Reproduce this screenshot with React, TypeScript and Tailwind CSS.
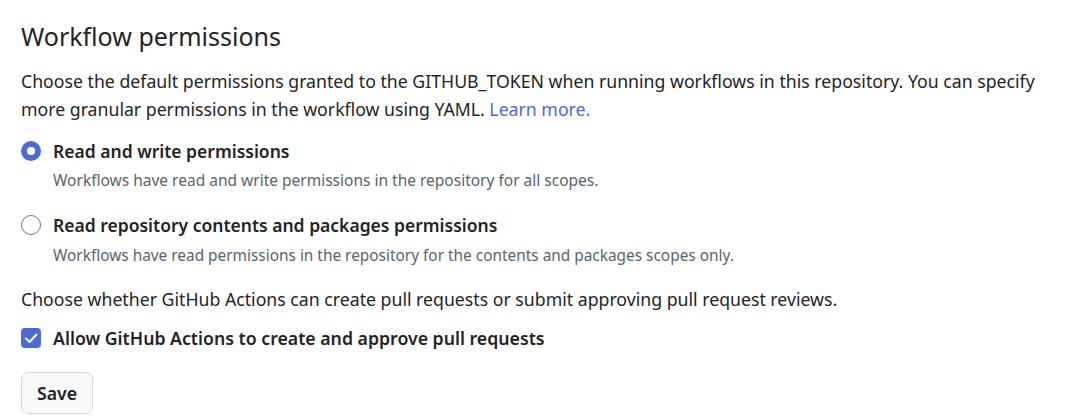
function Radio({ checked }: { checked: boolean }) {
  return checked ? (
    <span className="w-[20px] h-[20px] rounded-full border-[6px] border-[#4d6bd5] bg-white shrink-0" />
  ) : (
    <span className="w-[20px] h-[20px] rounded-full border border-[#6e7781] bg-white shrink-0" />
  );
}

export default function App() {
  return (
    <div className="pt-[18px] px-[21px] text-[#1f2328]" style={{ fontFamily: "'Noto Sans', sans-serif" }}>
      <h2 className="text-[25px] leading-[36px] font-normal">Workflow permissions</h2>
      <p className="mt-[13px] text-[17.7px] leading-[28px] w-[1050px]">
        Choose the default permissions granted to the GITHUB_TOKEN when running workflows in this repository. You can specify more granular permissions in the workflow using YAML.{" "}
        <a className="text-[#4d6bd5]">Learn more.</a>
      </p>

      <div className="mt-[16px] flex flex-col">
        <label className="flex items-center gap-[12px] h-[24px]">
          <Radio checked />
          <span className="text-[17.5px] font-semibold leading-[24px]">Read and write permissions</span>
        </label>
        <div className="mt-[6px] ml-[32px] text-[15.5px] leading-[22px] text-[#59636e]">
          Workflows have read and write permissions in the repository for all scopes.
        </div>
      </div>

      <div className="mt-[22px] flex flex-col">
        <label className="flex items-center gap-[12px] h-[24px]">
          <Radio checked={false} />
          <span className="text-[17.5px] font-semibold leading-[24px]">Read repository contents and packages permissions</span>
        </label>
        <div className="mt-[8px] ml-[32px] text-[15.4px] leading-[22px] text-[#59636e]">
          Workflows have read permissions in the repository for the contents and packages scopes only.
        </div>
      </div>

      <p className="mt-[20px] text-[17.7px] leading-[24px]">
        Choose whether GitHub Actions can create pull requests or submit approving pull request reviews.
      </p>

      <label className="mt-[15px] flex items-center gap-[12px] h-[24px]">
        <span className="w-[20px] h-[20px] rounded-[4px] bg-[#4d6bd5] flex items-center justify-center shrink-0">
          <svg width="16" height="16" viewBox="0 0 16 16" fill="none">
            <path d="M3 8.5 L6.5 12 L13.5 4.5" stroke="white" strokeWidth="2" strokeLinecap="round" strokeLinejoin="round" />
          </svg>
        </span>
        <span className="text-[17.7px] font-semibold leading-[24px]">Allow GitHub Actions to create and approve pull requests</span>
      </label>

      <button className="mt-[22px] w-[72px] h-[42px] rounded-[7px] border border-[#d1d9e0] bg-[#f6f8fa] text-[17.7px] font-semibold text-[#1f2328] flex items-center justify-center">
        Save
      </button>
    </div>
  );
}
